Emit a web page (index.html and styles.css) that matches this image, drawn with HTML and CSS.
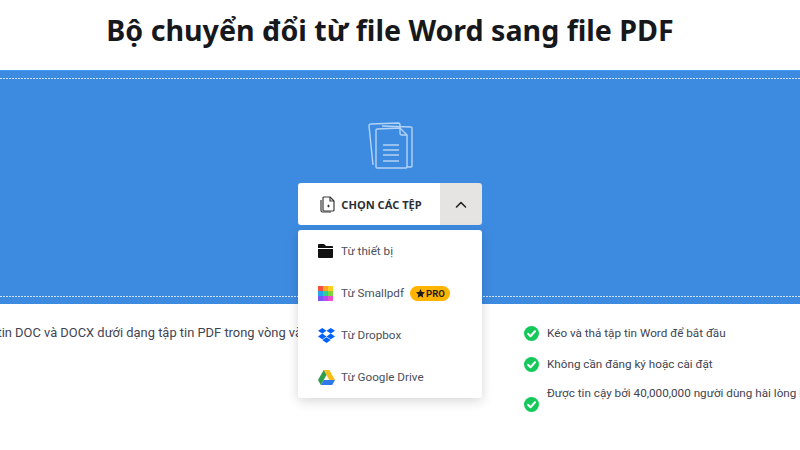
FILE: index.html
```html
<!DOCTYPE html>
<html lang="vi">
<head>
<meta charset="utf-8">
<title>Word sang PDF</title>
<link rel="stylesheet" href="styles.css">
</head>
<body>
<h1 class="title">Bộ chuyển đổi từ file Word sang file PDF</h1>
<section class="drop">
  <div class="drop-inner">
    <svg class="docs" width="46" height="50" viewBox="0 0 46 50" fill="none" stroke="#b4d3f4" stroke-width="1.4" stroke-linejoin="round">
      <path d="M5 44 1 5q0-2 2-2l27-1q2 0 2 2v3"/>
      <path d="M14 5l29 1q1 0 1 1l0 38q0 1-1 1h-4"/>
      <path d="M8 9q0-1 1-1l23-1 7 7v32q0 1-1 1H9q-1 0-1-1z" fill="#3d8be0"/>
      <path d="M32 7v5q0 2 2 2h5"/>
      <path d="M15 24h16M15 29h16M15 34h16M15 40h16" stroke-width="1.500"/>
    </svg>
    <div class="picker">
      <button class="pick">
        <svg width="15" height="17" viewBox="0 0 15 17" fill="none" stroke="#3a3a3a" stroke-width="1.200" stroke-linejoin="round">
          <path d="M4 1h6l4 4v9q0 1-1 1H4q-1 0-1-1V2q0-1 1-1z"/>
          <path d="M10 1v4h4"/>
          <path d="M1 4v10.500q0 1.500 1.500 1.500H11"/>
          <path d="M8.500 8.700v2.600M7.200 10h2.600" stroke-width="1"/>
        </svg>
        <span>CHỌN CÁC TỆP</span>
      </button>
      <button class="toggle" aria-label="Thu gọn">
        <svg width="14" height="9" viewBox="0 0 14 9" fill="none" stroke="#222" stroke-width="1.600" stroke-linecap="round" stroke-linejoin="round"><path d="M2.500 7l4.500-4.500 4.500 4.500"/></svg>
      </button>
      <ul class="menu">
        <li class="item">
          <span class="slot"><svg width="15" height="14" viewBox="0 0 15 14"><path fill="#111" d="M0 1q0-1 1-1h5l2 2h6q1 0 1 1v1H0zM0 5h15v8q0 1-1 1H1q-1 0-1-1z"/></svg></span>
          <span>Từ thiết bị</span>
        </li>
        <li class="item">
          <span class="slot"><svg width="15" height="15" viewBox="0 0 15 15">
            <rect width="5" height="5" fill="#f5523c"/><rect x="5" width="5" height="5" fill="#f8a623"/><rect x="10" width="5" height="5" fill="#ffce1f"/>
            <rect y="5" width="5" height="5" fill="#24a4f0"/><rect x="5" y="5" width="5" height="5" fill="#2fd28a"/><rect x="10" y="5" width="5" height="5" fill="#7ed63e"/>
            <rect y="10" width="5" height="5" fill="#7d55f0"/><rect x="5" y="10" width="5" height="5" fill="#b44cf0"/><rect x="10" y="10" width="5" height="5" fill="#f04ed0"/>
          </svg></span>
          <span>Từ Smallpdf</span>
          <span class="pro">
            <svg width="9" height="9" viewBox="0 0 10 10"><path fill="#1a1a1a" d="M5 0l1.500 3.300L10 3.700 7.400 6.100 8.100 9.700 5 7.900 1.900 9.700l.7-3.600L0 3.700l3.500-.4z"/></svg>PRO
          </span>
        </li>
        <li class="item">
          <span class="slot"><svg width="17" height="15" viewBox="0 0 17 15"><path fill="#0061fe" d="M4.250 0 0 2.800l4.250 2.800L8.500 2.800zM12.750 0 8.500 2.800l4.250 2.800L17 2.800zM0 8.400l4.250 2.800L8.500 8.400 4.250 5.600zM12.750 5.600 8.500 8.400l4.250 2.800L17 8.400zM4.250 12l4.250 3 4.250-3-4.250-2.800z"/></svg></span>
          <span>Từ Dropbox</span>
        </li>
        <li class="item">
          <span class="slot"><svg width="17" height="15" viewBox="0 0 17 15">
            <path fill="#f8bc16" d="M5.700 0h5.600l5.700 10h-5.700z"/>
            <path fill="#2f9e48" d="M5.700 0 0 10l2.800 5 5.700-10z"/>
            <path fill="#2f78e8" d="M5.700 10H17l-2.800 5H2.800z"/>
          </svg></span>
          <span>Từ Google Drive</span>
        </li>
      </ul>
    </div>
  </div>
</section>
<section class="info">
  <p class="intro">Tập tin DOC và DOCX dưới dạng tập tin PDF trong vòng vài giây</p>
  <ul class="checks">
    <li class="check"><svg class="tick" width="15" height="15" viewBox="0 0 15 15"><circle cx="7.500" cy="7.500" r="7.500" fill="#14c95a"/><path d="M4 7.800l2.500 2.400L11 5.300" fill="none" stroke="#fff" stroke-width="2" stroke-linecap="round" stroke-linejoin="round"/></svg><span>Kéo và thả tập tin Word để bắt đầu</span></li>
    <li class="check"><svg class="tick" width="15" height="15" viewBox="0 0 15 15"><circle cx="7.500" cy="7.500" r="7.500" fill="#14c95a"/><path d="M4 7.800l2.500 2.400L11 5.300" fill="none" stroke="#fff" stroke-width="2" stroke-linecap="round" stroke-linejoin="round"/></svg><span>Không cần đăng ký hoặc cài đặt</span></li>
    <li class="check tall"><svg class="tick" width="15" height="15" viewBox="0 0 15 15"><circle cx="7.500" cy="7.500" r="7.500" fill="#14c95a"/><path d="M4 7.800l2.500 2.400L11 5.300" fill="none" stroke="#fff" stroke-width="2" stroke-linecap="round" stroke-linejoin="round"/></svg><span>Được tin cậy bởi 40,000,000 người dùng hài lòng hằng tháng</span></li>
  </ul>
</section>
</body>
</html>
```
FILE: styles.css
```css
* { box-sizing: border-box; }
html, body { margin: 0; padding: 0; }
body {
  width: 800px;
  height: 450px;
  overflow: hidden;
  background: #fff;
  font-family: Roboto, sans-serif;
  color: #3f4450;
}
.title {
  margin: 0;
  height: 70px;
  padding: 8px 20px 0 0;
  text-align: center;
  font-family: "Noto Sans", sans-serif;
  font-size: 28.600px;
  line-height: 44px;
  font-weight: 700;
  color: #17181c;
}
.drop {
  height: 234px;
  padding: 7px 0;
  background: #3d8be0;
  border-top: 1px solid #429af8;
}
.drop-inner {
  height: 100%;
  padding: 43px 20px 0 0;
  display: flex;
  flex-direction: column;
  align-items: center;
  background-image:
    repeating-linear-gradient(90deg, #cfe2f8 0 2px, transparent 2px 3px),
    repeating-linear-gradient(90deg, #cfe2f8 0 2px, transparent 2px 3px);
  background-size: 100% 1px, 100% 1px;
  background-position: 0 0, 0 100%;
  background-repeat: no-repeat;
}
.docs { display: block; margin-left: 2px; }
.picker {
  position: relative;
  margin-top: 12px;
  display: flex;
  width: 184px;
  height: 42px;
}
.pick {
  flex: 1;
  display: flex;
  align-items: center;
  justify-content: center;
  gap: 6px;
  border: 0;
  padding: 0 0 0 4px;
  background: #fff;
  border-radius: 3px 0 0 3px;
  font: 700 11.100px "Noto Sans", sans-serif;
  color: #2c2f36;
}
.toggle {
  flex: 0 0 42px;
  display: flex;
  align-items: center;
  justify-content: center;
  border: 0;
  padding: 0;
  background: #e5e4e3;
  border-radius: 0 3px 3px 0;
}
.menu {
  position: absolute;
  top: 47px;
  left: 0;
  width: 184px;
  height: 168px;
  margin: 0;
  padding: 0;
  list-style: none;
  background: #fff;
  border-radius: 3px;
  box-shadow: 0 3px 12px rgba(0, 0, 0, .16);
  display: grid;
  grid-auto-rows: 42px;
}
.item {
  display: flex;
  align-items: center;
  padding-left: 20px;
  font-size: 11.700px;
  color: #4b4f5c;
}
.slot {
  flex: 0 0 23px;
  display: flex;
  align-items: center;
}
.pro {
  margin-left: 6px;
  height: 15px;
  padding: 0 5px 0 6px;
  display: inline-flex;
  align-items: center;
  gap: 1px;
  border-radius: 8px;
  background: #ffb400;
  font-size: 9.500px;
  font-weight: 700;
  color: #1e1e1e;
}
.info {
  display: flex;
  padding-top: 20px;
}
.intro {
  flex: 0 0 auto;
  width: 524px;
  margin: 0 0 0 -27px;
  white-space: nowrap;
  font-size: 12.900px;
  line-height: 18px;
}
.checks {
  margin: 0;
  padding: 0 0 0 27px;
  list-style: none;
  font-size: 11.700px;
  white-space: nowrap;
}
.check {
  display: flex;
  align-items: center;
  gap: 8px;
  height: 18px;
  margin-bottom: 13px;
}
.check.tall { height: 36px; }
.check.tall span { align-self: flex-start; }
.tick { flex: 0 0 auto; }
```
